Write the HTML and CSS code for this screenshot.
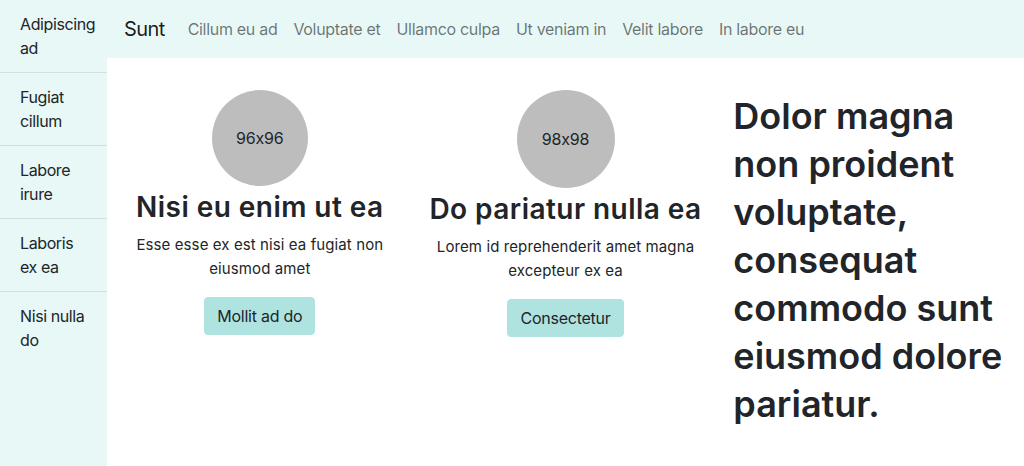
FILE: index.html
```html
<!DOCTYPE html>
<html lang="en">
<head>
<meta charset="utf-8">
<title>Layout</title>
<link rel="stylesheet" href="styles.css">
</head>
<body>
<div class="page">
  <aside class="sidebar">
    <a class="side-item" href="#">Adipiscing ad</a>
    <a class="side-item" href="#">Fugiat cillum</a>
    <a class="side-item" href="#">Labore irure</a>
    <a class="side-item" href="#">Laboris ex ea</a>
    <a class="side-item" href="#">Nisi nulla do</a>
  </aside>
  <div class="main">
    <nav class="topnav">
      <a class="brand" href="#">Sunt</a>
      <a class="nav-link" href="#">Cillum eu ad</a>
      <a class="nav-link" href="#">Voluptate et</a>
      <a class="nav-link" href="#">Ullamco culpa</a>
      <a class="nav-link" href="#">Ut veniam in</a>
      <a class="nav-link" href="#">Velit labore</a>
      <a class="nav-link" href="#">In labore eu</a>
    </nav>
    <div class="content">
      <div class="col col-center">
        <div class="avatar avatar-96">96x96</div>
        <h3 class="card-title">Nisi eu enim ut ea</h3>
        <p class="card-text">Esse esse ex est nisi ea fugiat non eiusmod amet</p>
        <button class="btn" type="button">Mollit ad do</button>
      </div>
      <div class="col col-center">
        <div class="avatar avatar-98">98x98</div>
        <h3 class="card-title">Do pariatur nulla ea</h3>
        <p class="card-text">Lorem id reprehenderit amet magna excepteur ex ea</p>
        <button class="btn" type="button">Consectetur</button>
      </div>
      <div class="col col-text">
        <h1 class="lead-title">Dolor magna non proident voluptate, consequat commodo sunt eiusmod dolore pariatur.</h1>
      </div>
    </div>
  </div>
</div>
</body>
</html>
```
FILE: styles.css
```css
* { box-sizing: border-box; }
html, body { margin: 0; padding: 0; }
body {
  font-family: Inter, "Noto Sans", "Liberation Sans", sans-serif;
  font-feature-settings: "calt" 0;
  font-size: 16px;
  line-height: 1.5;
  color: #212529;
  background: #fff;
}
.page {
  display: flex;
  min-height: 466px;
}
.sidebar {
  width: 107px;
  flex: 0 0 107px;
  background: #e7f8f7;
  display: flex;
  flex-direction: column;
}
.side-item {
  display: block;
  padding: 12px 16px 12px 20px;
  color: #212529;
  text-decoration: none;
  letter-spacing: -0.4px;
  border-bottom: 1px solid #cfe1e0;
}
.side-item:last-child {
  border-bottom: 0;
}
.main {
  flex: 1;
  display: flex;
  flex-direction: column;
}
.topnav {
  height: 58px;
  background: #e7f8f7;
  display: flex;
  align-items: center;
  padding: 0 8px 0 17px;
}
.brand {
  font-size: 20px;
  color: rgba(0, 0, 0, 0.9);
  text-decoration: none;
  letter-spacing: -0.6px;
  margin-right: 15px;
}
.nav-link {
  padding: 0 8px;
  color: rgba(0, 0, 0, 0.55);
  text-decoration: none;
  letter-spacing: -0.3px;
}
.content {
  display: flex;
  align-items: flex-start;
  padding-top: 32px;
}
.col {
  flex: 1 1 0;
  min-width: 0;
  padding: 0 15px;
}
.col-center {
  text-align: center;
  display: flex;
  flex-direction: column;
  align-items: center;
}
.avatar {
  border-radius: 50%;
  background: #bdbdbd;
  color: #212529;
  display: flex;
  align-items: center;
  justify-content: center;
  font-size: 16px;
  letter-spacing: -0.2px;
}
.avatar-96 { width: 96px; height: 96px; }
.avatar-98 { width: 98px; height: 98px; }
.card-title {
  font-size: 28px;
  font-weight: 600;
  line-height: 42px;
  letter-spacing: 0.45px;
  margin: 0;
}
.card-text {
  margin: 5px 0 16px;
  font-size: 15px;
  line-height: 24px;
  letter-spacing: 0.1px;
}
.btn {
  font-family: inherit;
  font-feature-settings: "calt" 0;
  font-size: 16px;
  line-height: 24px;
  padding: 6px 12px;
  color: #212529;
  background: #aee3e0;
  border: 1px solid #aee3e0;
  border-radius: 4px;
  letter-spacing: -0.25px;
}
.col-text {
  padding-top: 2px;
}
.lead-title {
  margin: 0;
  font-size: 36px;
  font-weight: 600;
  line-height: 48px;
}
```
